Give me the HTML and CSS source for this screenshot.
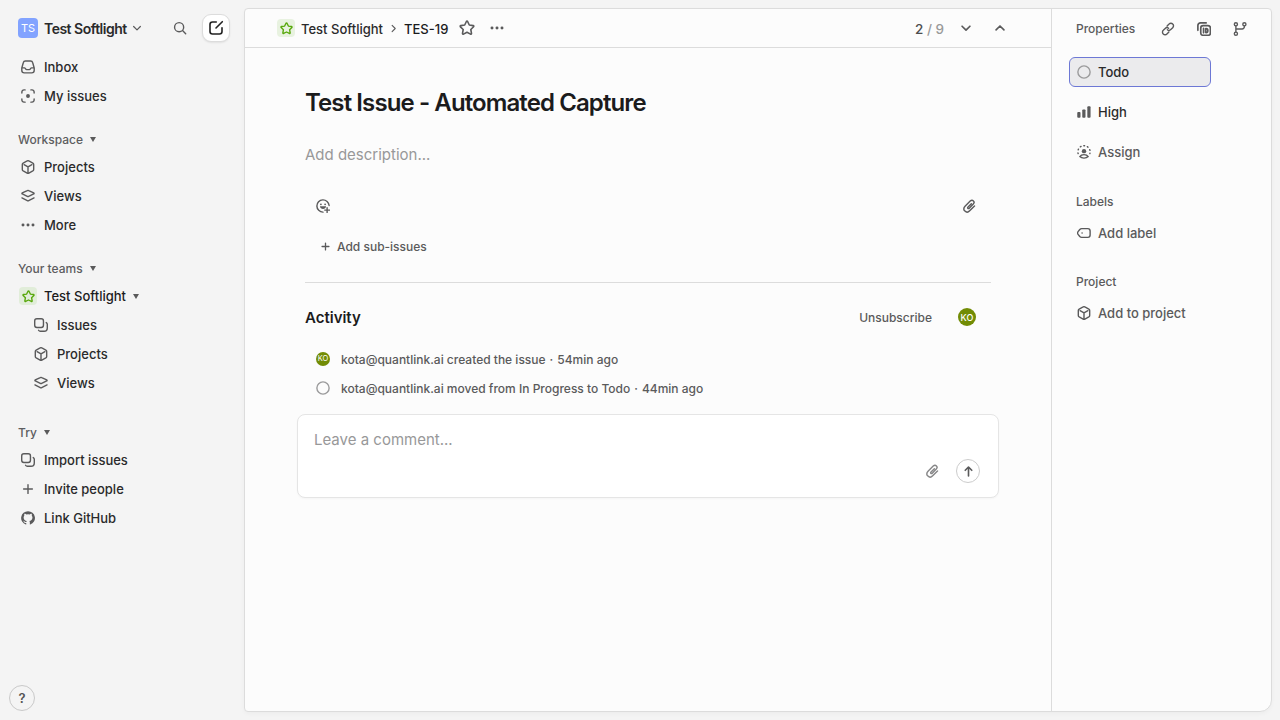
FILE: index.html
```html
<!DOCTYPE html>
<html lang="en">
<head>
<meta charset="utf-8">
<title>TES-19 Test Issue - Automated Capture</title>
<link rel="stylesheet" href="styles.css">
</head>
<body>
<svg class="sprite" aria-hidden="true">
  <symbol id="i-inbox" viewBox="0 0 16 16"><path d="M.9 9.200 2.700 2.900A2.400 2.400 0 0 1 5 1.100h6a2.400 2.400 0 0 1 2.300 1.800l1.800 6.300v2.600a2.900 2.900 0 0 1-2.900 2.900H3.800a2.900 2.900 0 0 1-2.900-2.900zM1 9h3c1 0 1.200 2 2.500 2h3c1.300 0 1.500-2 2.500-2h3"/></symbol>
  <symbol id="i-focus" viewBox="0 0 16 16"><path d="M1 4.700V3.400A2.400 2.400 0 0 1 3.400 1h1.300M11.300 1h1.300A2.400 2.400 0 0 1 15 3.400v1.300M15 11.300v1.300a2.400 2.400 0 0 1-2.400 2.400h-1.300M4.700 15H3.400A2.400 2.400 0 0 1 1 12.600v-1.300"/><circle cx="8" cy="8" r="2.200" class="fill"/></symbol>
  <symbol id="i-cube" viewBox="0 0 16 16"><path d="M7 1.100a2 2 0 0 1 2 0l4.500 2.400a2 2 0 0 1 1 1.700v5.600a2 2 0 0 1-1 1.700L9 14.900a2 2 0 0 1-2 0l-4.500-2.400a2 2 0 0 1-1-1.700V5.200a2 2 0 0 1 1-1.700zM3.500 5.400 8 7.900l4.500-2.500M8 7.900v6.500"/></symbol>
  <symbol id="i-layers" viewBox="0 0 16 16"><path d="M7.200 1.800a1.700 1.700 0 0 1 1.600 0L14.500 4.500c.6.300.6.900 0 1.200L8.800 8.400a1.700 1.700 0 0 1-1.600 0L1.500 5.700c-.6-.3-.6-.9 0-1.200zM1.100 10.200 7.200 13.300a1.600 1.600 0 0 0 1.600 0l6.100-3.100"/></symbol>
  <symbol id="i-more" viewBox="0 0 16 16"><g class="fill"><circle cx="2.300" cy="8" r="1.700"/><circle cx="8" cy="8" r="1.700"/><circle cx="13.700" cy="8" r="1.700"/></g></symbol>
  <symbol id="i-copies" viewBox="0 0 16 16"><rect x=".8" y=".8" width="10" height="10" rx="2.500"/><path d="M14 5.200c.8.500 1.200 1.200 1.200 2v4.300a3.700 3.700 0 0 1-3.700 3.700H7.200c-.8 0-1.500-.4-2-1.200"/></symbol>
  <symbol id="i-plus" viewBox="0 0 16 16"><path d="M8 3v10M3 8h10"/></symbol>
  <symbol id="i-github" viewBox="0 0 16 16"><path class="fill" d="M8 .3a7.800 7.800 0 0 0-2.500 15.200c.4.100.5-.2.500-.4v-1.400c-2.200.5-2.600-1-2.600-1-.4-.9-.9-1.200-.9-1.200-.7-.5.100-.5.100-.5.800.1 1.200.8 1.200.8.700 1.200 1.800.9 2.300.7.100-.5.300-.9.500-1.100-1.800-.2-3.600-.9-3.600-3.900 0-.9.300-1.600.8-2.100-.1-.2-.4-1 .1-2.100 0 0 .7-.2 2.200.8a7.600 7.600 0 0 1 3.900 0c1.500-1 2.200-.8 2.200-.8.400 1.100.2 1.900.1 2.100.5.600.8 1.300.8 2.100 0 3-1.800 3.700-3.600 3.900.3.300.6.700.6 1.500v2.200c0 .2.100.5.500.4A7.800 7.800 0 0 0 8 .3z"/></symbol>
  <symbol id="i-star" viewBox="0 0 16 16"><path d="M7.400 1.500a.7.700 0 0 1 1.200 0l1.700 3.500 3.900.6c.6.100.8.800.4 1.200l-2.800 2.700.7 3.900c.1.600-.5 1-1 .7L8 12.300l-3.500 1.800c-.5.300-1.100-.1-1-.7l.7-3.900L1.400 6.800c-.4-.4-.2-1.100.4-1.200L5.700 5z"/></symbol>
  <symbol id="i-down" viewBox="0 0 16 16"><path d="m3.500 6 4.500 4.500L12.500 6"/></symbol>
  <symbol id="i-up" viewBox="0 0 16 16"><path d="M3.500 10.200 8 5.700l4.500 4.500"/></symbol>
  <symbol id="i-search" viewBox="0 0 16 16"><circle cx="7" cy="7" r="5.200"/><path d="m10.900 10.900 3.600 3.600"/></symbol>
  <symbol id="i-compose" viewBox="0 0 16 16"><path d="M8.300 2H4.500A2.500 2.500 0 0 0 2 4.500v7A2.500 2.500 0 0 0 4.500 14h7a2.500 2.500 0 0 0 2.500-2.500V7.700M8 8l6.300-6.300"/></symbol>
  <symbol id="i-clip" viewBox="0 0 16 16"><path d="M11 5.600 7.200 9.800c-1 1.100-2.500-.2-1.500-1.300l4.800-5.200c2-2.200 5.200.6 3.200 2.900M13.700 6.200 8.300 12.200c-3.400 3.700-8.600-.7-5.300-4.500l4.700-5.200M14.800 8.200 8.900 13.700" /></symbol>
  <symbol id="i-paperclip" viewBox="0 0 16 16"><path d="M10.700 5.300 6.900 9.200c-1.100 1.100.3 2.500 1.400 1.400l4.600-4.800C15.400 3.200 12-.2 9.400 2.400L3.500 8.400c-3.700 3.900 1.500 8.900 5.300 5.100l5.500-5.600"/></symbol>
  <symbol id="i-smile" viewBox="0 0 16 16"><path d="M15 7.500A7 7 0 1 0 8 15M12.700 10v5.400M10 12.700h5.400"/><g class="fill"><circle cx="5.600" cy="6" r="1"/><circle cx="10.400" cy="6" r="1"/><path d="M4.500 8.300h7c-.3 2-1.600 3.200-3.500 3.200S4.800 10.300 4.500 8.300z"/></g></symbol>
  <symbol id="i-link" viewBox="0 0 16 16"><path d="m7 4.500 2.200-2.200a2.900 2.900 0 0 1 4.200 0c1.200 1.200 1.200 3 0 4.200l-2.200 2.200c-1.100 1.100-2.800 1.100-3.900.2M9 11.500l-2.200 2.200a2.900 2.900 0 0 1-4.200 0 2.900 2.900 0 0 1 0-4.200l2.200-2.200c1.100-1.100 2.800-1.100 3.900-.2"/></symbol>
  <symbol id="i-copyid" viewBox="0 0 16 16"><path d="M1 9.500V4a3 3 0 0 1 3-3h6.500"/><rect x="4.300" y="4.200" width="11" height="11" rx="2.700"/><path d="M7.500 7.200v5.200M10 7.500v4.600h.6c2.400 0 2.400-4.600 0-4.600z"/></symbol>
  <symbol id="i-branch" viewBox="0 0 16 16"><circle cx="3.300" cy="2.600" r="1.800"/><circle cx="3.300" cy="13.400" r="1.800"/><circle cx="13" cy="2.600" r="1.800"/><path d="M3.300 4.500v7M13 4.500v1A2.500 2.500 0 0 1 10.500 8H3.300"/></symbol>
  <symbol id="i-circle" viewBox="0 0 16 16"><circle cx="8" cy="8" r="7"/></symbol>
  <symbol id="i-bars" viewBox="0 0 16 16"><g class="fill"><rect x=".3" y="8" width="3.700" height="6.500" rx="1"/><rect x="6" y="5" width="3.700" height="9.500" rx="1"/><rect x="11.800" y="1.500" width="3.700" height="13" rx="1"/></g></symbol>
  <symbol id="i-assign" viewBox="0 0 16 16"><circle cx="8" cy="7" r="2.500" class="fill"/><path d="M3.200 13.200c1-1.500 2.700-2.200 4.800-2.200s3.800.7 4.800 2.200c-1.200 1.200-3 1.800-4.800 1.800s-3.600-.6-4.800-1.800z"/><path stroke-dasharray=".9 3.350" d="M1.300 9.800A7 7 0 1 1 14.700 9.800"/></symbol>
  <symbol id="i-tag" viewBox="0 0 16 16"><path d="M5.400 3h7A2.600 2.600 0 0 1 15 5.600v4.800a2.600 2.600 0 0 1-2.600 2.600h-7a3 3 0 0 1-2.200-1L1.200 9.500a2.200 2.200 0 0 1 0-3L3.200 4a3 3 0 0 1 2.200-1z"/><circle cx="5.800" cy="8" r=".9" class="fill"/></symbol>
  <symbol id="i-arrow" viewBox="0 0 16 16"><path d="M8 13.500V2.800M4 6.500l4-4 4 4"/></symbol>
</svg>
<div class="app">
  <aside class="sidebar">
    <header class="workspace">
      <span class="logo">TS</span>
      <span class="workspace-name">Test Softlight</span>
      <svg class="icon chevron"><use href="#i-down"/></svg>
      <svg class="icon search"><use href="#i-search"/></svg>
      <button class="compose"><svg class="icon"><use href="#i-compose"/></svg></button>
    </header>
    <nav class="nav">
      <a class="item"><svg class="icon"><use href="#i-inbox"/></svg>Inbox</a>
      <a class="item"><svg class="icon"><use href="#i-focus"/></svg>My issues</a>
    </nav>
    <h2 class="heading">Workspace <i class="caret"></i></h2>
    <nav class="nav">
      <a class="item"><svg class="icon"><use href="#i-cube"/></svg>Projects</a>
      <a class="item"><svg class="icon"><use href="#i-layers"/></svg>Views</a>
      <a class="item"><svg class="icon"><use href="#i-more"/></svg>More</a>
    </nav>
    <h2 class="heading">Your teams <i class="caret"></i></h2>
    <nav class="nav">
      <a class="item team"><span class="team-icon"><svg class="icon"><use href="#i-star"/></svg></span><span>Test Softlight</span> <i class="caret"></i></a>
      <a class="item nested"><svg class="icon"><use href="#i-copies"/></svg>Issues</a>
      <a class="item nested"><svg class="icon"><use href="#i-cube"/></svg>Projects</a>
      <a class="item nested"><svg class="icon"><use href="#i-layers"/></svg>Views</a>
    </nav>
    <h2 class="heading try">Try <i class="caret"></i></h2>
    <nav class="nav">
      <a class="item"><svg class="icon"><use href="#i-copies"/></svg>Import issues</a>
      <a class="item"><svg class="icon"><use href="#i-plus"/></svg>Invite people</a>
      <a class="item"><svg class="icon"><use href="#i-github"/></svg>Link GitHub</a>
    </nav>
    <button class="help">?</button>
  </aside>
  <div class="panel">
    <main class="main">
      <header class="topbar">
        <span class="team-icon"><svg class="icon"><use href="#i-star"/></svg></span>
        <span class="crumb">Test Softlight</span>
        <svg class="icon crumb-sep"><use href="#i-down"/></svg>
        <span class="issue-id">TES-19</span>
        <svg class="icon favorite"><use href="#i-star"/></svg>
        <svg class="icon options"><use href="#i-more"/></svg>
        <span class="counter">2 <span>/ 9</span></span>
        <svg class="icon arrow-nav"><use href="#i-down"/></svg>
        <svg class="icon arrow-nav last"><use href="#i-up"/></svg>
      </header>
      <section class="content">
        <h1 class="title">Test Issue - Automated Capture</h1>
        <p class="description">Add description...</p>
        <div class="reactions">
          <svg class="icon"><use href="#i-smile"/></svg>
          <svg class="icon"><use href="#i-paperclip"/></svg>
        </div>
        <div class="sub-issues"><svg class="icon"><use href="#i-plus"/></svg>Add sub-issues</div>
        <div class="activity-head">
          <h2>Activity</h2>
          <span class="unsubscribe">Unsubscribe</span>
          <span class="avatar">KO</span>
        </div>
        <div class="event"><span class="avatar small">KO</span><p><b>kota@quantlink.ai</b> created the issue<span class="dot">·</span>54min ago</p></div>
        <div class="event"><svg class="icon status"><use href="#i-circle"/></svg><p><b>kota@quantlink.ai</b> moved from <b>In Progress</b> to <b>Todo</b><span class="dot">·</span>44min ago</p></div>
        <div class="comment">
          <p>Leave a comment...</p>
          <div class="comment-actions">
            <svg class="icon"><use href="#i-paperclip"/></svg>
            <button class="send"><svg class="icon"><use href="#i-arrow"/></svg></button>
          </div>
        </div>
      </section>
    </main>
    <aside class="properties">
      <header class="properties-head">
        <h3>Properties</h3>
        <svg class="icon"><use href="#i-link"/></svg>
        <svg class="icon heavy"><use href="#i-copyid"/></svg>
        <svg class="icon"><use href="#i-branch"/></svg>
      </header>
      <div class="prop selected"><svg class="icon status"><use href="#i-circle"/></svg>Todo</div>
      <div class="prop"><svg class="icon"><use href="#i-bars"/></svg>High</div>
      <div class="prop muted"><svg class="icon"><use href="#i-assign"/></svg>Assign</div>
      <h3 class="label-head">Labels</h3>
      <div class="prop muted"><svg class="icon"><use href="#i-tag"/></svg>Add label</div>
      <h3 class="label-head project-head">Project</h3>
      <div class="prop muted"><svg class="icon"><use href="#i-cube"/></svg>Add to project</div>
    </aside>
  </div>
</div>
</body>
</html>
```
FILE: styles.css
```css
* { box-sizing: border-box; }
body { margin: 0; background: #f4f4f4; font-family: Inter, sans-serif; font-size: 13px; font-weight: 450; color: #2a2a2b; }
h1, h2, h3, p { margin: 0; }
button { padding: 0; font: inherit; }
.sprite { position: absolute; width: 0; height: 0; }
.icon { width: 14px; height: 14px; flex: none; overflow: visible; fill: none; stroke: currentColor; stroke-width: 1.6; stroke-linecap: round; stroke-linejoin: round; color: #5a5a5b; }
.fill { fill: currentColor; stroke: none; }
.app { display: flex; width: 1280px; height: 720px; overflow: hidden; }
.sidebar { display: flex; flex-direction: column; width: 244px; flex: none; }
.workspace { display: flex; align-items: center; height: 56px; margin-bottom: -3px; padding: 0 14px 0 18px; }
.logo { display: flex; align-items: center; justify-content: center; width: 20px; height: 20px; border-radius: 4px; background: #82a3ff; color: #fff; font-size: 11px; font-weight: 400; }
.workspace-name { margin-left: 6px; font-size: 14px; font-weight: 600; letter-spacing: -0.5px; width: 83px; white-space: nowrap; }
.chevron { width: 12px; height: 12px; margin-left: 4px; }
.search { margin-left: 30px; }
.compose { display: flex; align-items: center; justify-content: center; width: 28px; height: 28px; margin-left: auto; border: 1px solid #dcdcdc; border-radius: 9px; background: #fff; box-shadow: 0 1px 2px rgba(0,0,0,.08); }
.compose .icon { width: 16px; height: 16px; color: #222; }
.nav { display: flex; flex-direction: column; gap: 1px; }
.item { display: flex; align-items: center; height: 28px; padding-left: 21px; gap: 9px; }
.nested { padding-left: 34px; }
.team { padding-left: 19px; gap: 7px; color: #1b1b1c; }
.heading { display: flex; align-items: center; height: 28px; margin-top: 15px; padding-left: 18px; gap: 7px; font-size: 12px; font-weight: 500; color: #5d5d5f; }
.try { margin-top: 21px; }
.caret { border: 3px solid transparent; border-top: 5px solid #5a5a5b; border-bottom: 0; margin-top: 1px; }
.team-icon { display: flex; align-items: center; justify-content: center; width: 18px; height: 18px; border-radius: 4px; background: #e1edd9; }
.topbar .team-icon { background: #e8f2e0; }
.team-icon .icon { width: 13px; height: 13px; color: #58a80c; stroke-width: 1.700; }
.help { width: 26px; height: 26px; margin: auto 0 9px 9px; border: 1px solid #c9c9c9; border-radius: 50%; background: none; font-weight: 600; color: #555; }
.panel { display: flex; width: 1028px; height: 704px; margin-top: 8px; border: 1px solid #dcdcdc; border-radius: 4px 4px 12px 4px; background: #fcfcfc; box-shadow: 0 2px 4px rgba(0,0,0,.03); }
.main { width: 806px; flex: none; }
.topbar { display: flex; align-items: center; height: 39px; padding: 0 45px 0 32px; border-bottom: 1px solid #dcdcdc; }
.crumb { margin-left: 6px; padding-top: 1px; width: 82px; white-space: nowrap; font-size: 13px; }
.crumb-sep { width: 11px; height: 11px; margin: 0 5px; transform: rotate(-90deg); }
.issue-id { width: 44px; padding-top: 1px; white-space: nowrap; font-weight: 500; color: #1b1b1c; }
.favorite { width: 16px; height: 16px; margin-left: 11px; }
.options { margin-left: 15px; }
.counter { margin-left: auto; padding-top: 1px; font-size: 13.500px; color: #4d4d4f; }
.counter span { color: #999; }
.arrow-nav { margin-left: 15px; stroke-width: 1.900; }
.last { margin-left: 20px; margin-right: -1px; }
.content { padding: 0 60px; }
.title { padding-top: 39px; font-size: 24px; line-height: 32px; font-weight: 600; letter-spacing: -0.900px; color: #1b1b1c; white-space: nowrap; }
.description { padding-top: 24px; font-size: 15px; font-weight: 400; line-height: 24px; color: #989899; }
.reactions { display: flex; align-items: center; justify-content: space-between; height: 28px; margin: 25px 15px 0 11px; }
.sub-issues { display: flex; align-items: center; gap: 6px; height: 28px; margin-top: 12px; padding-left: 15px; font-size: 12px; font-weight: 500; color: #5a5a5b; }
.sub-issues .icon { width: 11px; height: 11px; stroke-width: 1.900; }
.activity-head { display: flex; align-items: center; height: 70px; margin-top: 22px; padding-right: 15px; border-top: 1px solid #dcdcdc; }
.activity-head h2 { font-size: 15px; font-weight: 600; color: #1b1b1c; }
.unsubscribe { margin-left: auto; font-size: 12px; font-weight: 500; color: #5a5a5b; }
.avatar { display: flex; align-items: center; justify-content: center; width: 18px; height: 18px; margin: 0 0 1px 26px; flex: none; border-radius: 50%; background: #728c05; color: #fff; font-size: 9px; font-weight: 450; }
.small { width: 14px; height: 14px; margin: 0; font-size: 7.500px; font-weight: 400; }
.event { display: flex; align-items: center; gap: 11px; height: 29px; margin-left: 11px; font-size: 12px; color: #5a5a5b; white-space: nowrap; }
.event p { padding-top: 1px; }
.activity-head + .event { margin-top: -8px; }
.event b { font-weight: 500; }
.dot { margin: 0 4px; }
.status { color: #9b9b9c; }
.comment { width: 702px; height: 84px; margin: 12px 0 0 -8px; padding: 14px 18px 12px 16px; border: 1px solid #e5e5e5; border-radius: 8px; background: #fff; box-shadow: 0 1px 2px rgba(0,0,0,.03); }
.comment p { font-size: 15px; font-weight: 400; line-height: 22px; color: #989899; }
.comment-actions { display: flex; align-items: center; justify-content: flex-end; gap: 17px; margin-top: 8px; }
.comment-actions > .icon { color: #868687; }
.send { display: flex; align-items: center; justify-content: center; width: 24px; height: 24px; border: 1px solid #ccc; border-radius: 50%; background: #fff; }
.send .icon { width: 13px; height: 13px; stroke-width: 2; }
.properties { width: 220px; border-left: 1px solid #dcdcdc; }
.properties-head { display: flex; align-items: center; gap: 22px; height: 39px; padding-left: 24px; }
.heavy { stroke-width: 1.900; }
.properties h3 { font-size: 12px; font-weight: 500; color: #5a5a5b; }
.properties-head h3 { width: 63px; }
.prop { display: flex; align-items: center; gap: 7px; width: 142px; height: 30px; margin: 0 0 10px 17px; padding-left: 7px; border: 1px solid transparent; border-radius: 6px; font-weight: 500; white-space: nowrap; }
.properties-head + .prop { margin-top: 9px; }
.selected { border-color: #6d78d5; background: #ebebed; }
.muted { color: #5a5a5b; }
.label-head { margin: 27px 0 0 24px; height: 15px; line-height: 15px; }
.label-head + .prop { margin-top: 9px; }
.project-head { margin-top: 26px; }
```
